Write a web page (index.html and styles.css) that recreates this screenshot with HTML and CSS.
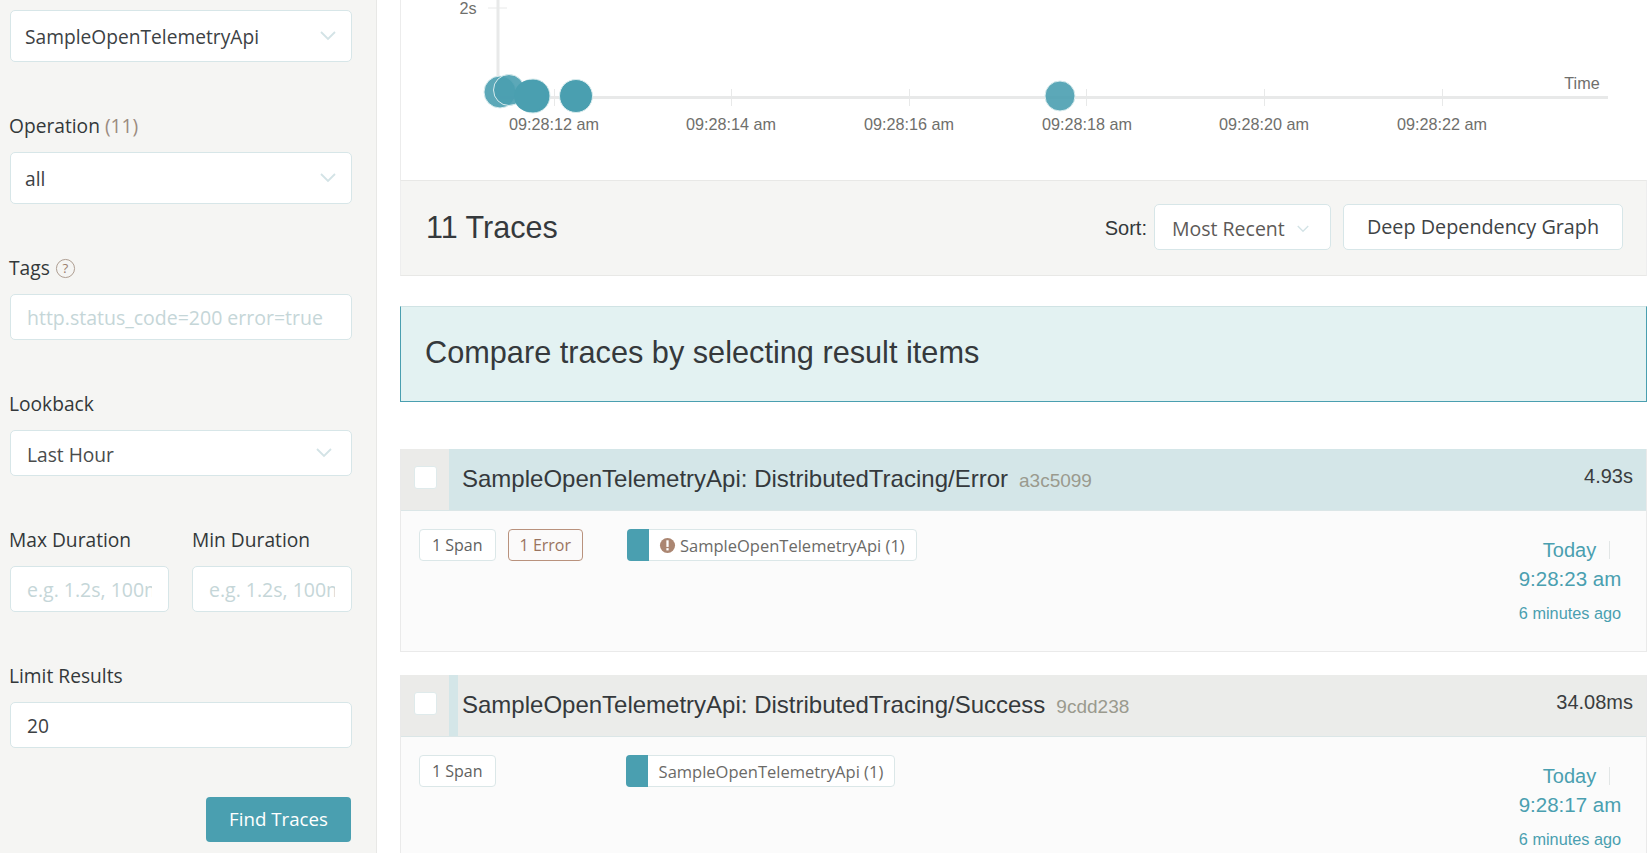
FILE: index.html
```html
<!DOCTYPE html>
<html lang="en">
<head>
<meta charset="utf-8">
<title>Jaeger UI</title>
<link rel="stylesheet" href="styles.css">
</head>
<body>
<div class="page">
  <aside class="sidebar">
    <div class="field">
      <div class="select tall"><span>SampleOpenTelemetryApi</span><svg class="chev" viewBox="0 0 16 10"><path d="M1 1l7 7 7-7"/></svg></div>
    </div>
    <div class="field">
      <div class="label">Operation <span class="muted">(11)</span></div>
      <div class="select tall"><span>all</span><svg class="chev" viewBox="0 0 16 10"><path d="M1 1l7 7 7-7"/></svg></div>
    </div>
    <div class="field">
      <div class="label">Tags <svg class="help" viewBox="0 0 22 22"><circle cx="11" cy="11" r="9.5"/><text x="11" y="16" text-anchor="middle">?</text></svg></div>
      <input class="input" placeholder="http.status_code=200 error=true">
    </div>
    <div class="field">
      <div class="label">Lookback</div>
      <div class="select"><span class="lookback">Last Hour</span><svg class="chev" viewBox="0 0 16 10"><path d="M1 1l7 7 7-7"/></svg></div>
    </div>
    <div class="field duo">
      <div class="col-max">
        <div class="label">Max Duration</div>
        <input class="input" placeholder="e.g. 1.2s, 100ms">
      </div>
      <div class="col-min">
        <div class="label">Min Duration</div>
        <input class="input" placeholder="e.g. 1.2s, 100ms">
      </div>
    </div>
    <div class="field last">
      <div class="label">Limit Results</div>
      <input class="input" value="20">
    </div>
    <div class="actions"><button class="find">Find Traces</button></div>
  </aside>

  <main class="main">
    <section class="chart">
      <svg class="plot" viewBox="0 0 1247 180" width="1247" height="180">
        <g class="axis">
          <path d="M98 -4V97.500H1208"/>
          <path class="thin" d="M88 8H107"/>
          <path class="thin" d="M154.500 89V106M331.500 89V106M509.500 89V106M686.500 89V106M864.500 89V106M1042.500 89V106"/>
        </g>
        <g class="ticks">
          <text x="68" y="14" text-anchor="middle">2s</text>
          <text x="154" y="130" text-anchor="middle">09:28:12 am</text>
          <text x="331" y="130" text-anchor="middle">09:28:14 am</text>
          <text x="509" y="130" text-anchor="middle">09:28:16 am</text>
          <text x="687" y="130" text-anchor="middle">09:28:18 am</text>
          <text x="864" y="130" text-anchor="middle">09:28:20 am</text>
          <text x="1042" y="130" text-anchor="middle">09:28:22 am</text>
          <text x="1182" y="89" text-anchor="middle">Time</text>
        </g>
        <g class="dots">
          <circle class="soft" cx="100" cy="92" r="16"/>
          <circle class="soft" cx="109" cy="90" r="15.500"/>
          <circle cx="133" cy="96" r="17"/>
          <circle class="core" cx="130" cy="96" r="16"/>
          <circle cx="176" cy="96" r="16.500"/>
          <circle class="soft" cx="660" cy="96" r="15"/>
        </g>
      </svg>
    </section>

    <section class="summary">
      <div class="count">11 Traces</div>
      <div class="summary-tools">
        <span class="sort-label">Sort:</span>
        <div class="sort"><span>Most Recent</span><svg class="chev small" viewBox="0 0 16 10"><path d="M1 1l7 7 7-7"/></svg></div>
        <button class="deep">Deep Dependency Graph</button>
      </div>
    </section>

    <section class="banner">Compare traces by selecting result items</section>

    <article class="trace first">
      <header class="trace-head error">
        <div class="check-cell"><span class="check"></span></div>
        <div class="trace-title"><span class="name">SampleOpenTelemetryApi: DistributedTracing/Error</span><span class="hash">a3c5099</span></div>
        <div class="duration">4.93s</div>
      </header>
      <div class="trace-body">
        <div class="tags">
          <span class="tag">1 Span</span>
          <span class="tag err">1 Error</span>
          <span class="svc">
            <span class="swatch"></span>
            <svg class="alert" viewBox="0 0 18 18"><circle cx="9" cy="9" r="8"/><rect x="7.800" y="3.500" width="2.400" height="7"/><rect x="7.800" y="11.800" width="2.400" height="2.400"/></svg>
            <span class="svc-name">SampleOpenTelemetryApi (1)</span>
          </span>
        </div>
        <div class="when">
          <div class="day"><span>Today</span><i class="sep"></i></div>
          <div class="time">9:28:23 am</div>
          <div class="ago">6 minutes ago</div>
        </div>
      </div>
    </article>

    <article class="trace">
      <header class="trace-head plain">
        <div class="check-cell"><span class="check"></span></div>
        <i class="strip"></i>
        <div class="trace-title short"><span class="name">SampleOpenTelemetryApi: DistributedTracing/Success</span><span class="hash">9cdd238</span></div>
        <div class="duration">34.08ms</div>
      </header>
      <div class="trace-body">
        <div class="tags">
          <span class="tag">1 Span</span>
          <span class="svc gap">
            <span class="swatch"></span>
            <span class="svc-name">SampleOpenTelemetryApi (1)</span>
          </span>
        </div>
        <div class="when">
          <div class="day"><span>Today</span><i class="sep"></i></div>
          <div class="time">9:28:17 am</div>
          <div class="ago">6 minutes ago</div>
        </div>
      </div>
    </article>
  </main>
</div>
</body>
</html>
```
FILE: styles.css
```css
* { box-sizing: border-box; }
html, body { margin: 0; height: 853px; overflow: hidden; background: #fff; }
body { font-family: "Open Sans", "Noto Sans", sans-serif; color: #333; }

.page { display: flex; height: 853px; }

.sidebar {
  width: 377px; flex: none; height: 853px;
  background: #f5f5f3; border-right: 1px solid #e8e8e6;
  padding: 10px 24px 0 10px;
}
.field { margin-bottom: 49px; }
.field.last { margin-bottom: 49px; }
.label { height: 28px; margin-bottom: 13px; margin-left: -1px; font-size: 19.200px; line-height: 28px; color: #33383a; display: flex; align-items: center; gap: 5px; white-space: nowrap; position: relative; top: 1px; }
.col-min .label { margin-left: 0; }
.muted { color: #9b8b80; }
.help { width: 21px; height: 21px; }
.help circle { fill: none; stroke: #ab9a8e; stroke-width: 1; }
.help text { font: 14px "Open Sans", sans-serif; fill: #9b7f6e; }

.select, .input {
  display: flex; align-items: center; justify-content: space-between;
  width: 100%; height: 46px; background: #fff;
  border: 1px solid #d7e6e8; border-radius: 5px;
  padding: 0 19px 0 16px; font-family: inherit; font-size: 19.200px; color: #3c4144; outline: none;
}
.select.tall { height: 52px; padding: 0 15px 0 14px; }
.lookback { color: #4a4c4c; position: relative; top: 1px; }
.input { padding: 1px 16px 0; }
.input::placeholder { color: #c5d6d8; opacity: 1; font-size: 19.500px; }
.chev { width: 16px; height: 10px; flex: none; }
.chev path { fill: none; stroke: #d3e3e6; stroke-width: 1.800; }
.chev.small { width: 12px; height: 8px; }

.duo { display: flex; justify-content: space-between; }
.col-max { width: 159px; }
.col-min { width: 160px; }
.actions { display: flex; justify-content: flex-end; padding-right: 1px; }
.find {
  width: 145px; height: 45px; background: #4a9fb0; color: #fff;
  border: 0; border-radius: 4px; font-family: inherit; font-size: 18.700px; padding: 0 0 2px;
}

.main { flex: none; width: 1247px; margin-left: 23px; }
.chart { height: 180px; border-left: 1px solid #ececec; overflow: hidden; }
.plot { display: block; overflow: hidden; margin-left: -1px; }
.axis path { fill: none; stroke: #e8e9e9; stroke-width: 3; }
.axis path.thin { stroke-width: 1; }
.ticks text { font: 16.200px "Liberation Sans", sans-serif; fill: #6f6f6c; }
.dots circle { fill: #4a9fb0; stroke: #d9ecee; stroke-width: 1; }
.dots .soft { fill-opacity: .9; }
.dots .core { stroke: none; }

.summary {
  height: 96px; display: flex; align-items: center; justify-content: space-between;
  background: #f5f5f3; border: 1px solid #e8e8e6; border-left-color: #eee; border-right-color: #eee;
  padding: 0 23px 2px 25px;
}
.count { font: 30.500px "Liberation Sans", sans-serif; color: #35393c; }
.summary-tools { display: flex; align-items: center; }
.sort-label { font: 20px "Liberation Sans", sans-serif; color: #33383a; margin-right: 7px; padding-top: 3px; }
.sort {
  width: 177px; height: 46px; display: flex; align-items: center; gap: 12px;
  background: #fff; border: 1px solid #d7e6e8; border-radius: 5px;
  padding: 3px 16px 0 17px; font-size: 19.500px; color: #5d5a58; white-space: nowrap;
}
.deep {
  width: 280px; height: 46px; margin-left: 12px; background: #fff;
  border: 1px solid #d7e6e8; border-radius: 5px; padding: 0 0 2px;
  font-family: inherit; font-size: 19.800px; color: #3e4345; white-space: nowrap;
}

.banner {
  height: 96px; margin-top: 30px; display: flex; align-items: center;
  padding: 0 0 2px 24px;
  background: #e3f2f2; border: 1px solid #d0e3e4; border-bottom-color: #4a9fb0; border-right-color: #4a9fb0; border-left-color: #4a9fb0;
  font: 30.700px "Liberation Sans", sans-serif; color: #35393c;
}

.trace { margin-top: 23px; border: 1px solid #eaeaea; border-top: 0; }
.trace.first { margin-top: 47px; height: 203px; }
.trace-head { height: 62px; display: flex; align-items: center; background: #ebecea; border-bottom: 1px solid #dbe6e7; }
.check-cell { width: 48px; height: 100%; background: #ebebe9; display: flex; align-items: center; justify-content: center; flex: none; }
.check { width: 23px; height: 23px; background: #fff; border: 1px solid #dfeaeb; border-radius: 3px; display: block; margin-top: -4px; }
.trace-head.error { background: #d4e6e8; }
.strip { width: 9px; height: 100%; background: #d4e6e8; flex: none; }
.trace-title { flex: 1; display: flex; align-items: baseline; padding: 0 0 2px 13px; font-family: "Liberation Sans", sans-serif; }
.trace-title.short { padding-left: 4px; }
.name { font-size: 24px; color: #35393c; }
.hash { font-size: 19px; color: #9a9a8e; margin-left: 11px; }
.duration { font: 20px "Liberation Sans", sans-serif; color: #3a3d3f; padding-right: 13px; padding-bottom: 6px; }

.trace-body { display: flex; justify-content: space-between; background: #fbfbfb; height: 140px; padding: 18px 24px 0 18px; }
.tags { display: flex; align-items: flex-start; }
.tag {
  height: 32px; padding: 0 12px; display: flex; align-items: center;
  background: #fff; border: 1px solid #dbe7e8; border-radius: 4px;
  font-size: 16px; color: #5f6261; margin-right: 12px; white-space: nowrap;
}
.tag.err { border-color: #b9927d; background: #fbfafa; color: #9a7460; margin-right: 0; padding: 0 11px; }
.svc {
  height: 32px; display: flex; align-items: center; background: #fff;
  border: 1px solid #dbe7e8; border-radius: 4px; margin-left: 44px;
  font-size: 16.500px; color: #6b6a67; padding-right: 11px; white-space: nowrap;
}
.svc.gap { margin-left: 118px; }
.swatch { width: 22px; height: 32px; background: #4a9fb0; margin: 0 10px 0 -1px; flex: none; border-radius: 4px 0 0 4px; }
.alert { width: 17px; height: 17px; margin-right: 4px; flex: none; }
.alert circle { fill: #ab8672; }
.alert rect { fill: #fff; }
.svc.gap .swatch { margin-right: 11px; }

.when { width: 104px; color: #4a9fb0; font-family: "Liberation Sans", sans-serif; text-align: center; padding-top: 9px; }
.day { font-size: 20px; line-height: 24px; position: relative; height: 24px; padding-right: 1px; }
.sep { position: absolute; right: 12px; top: 3px; width: 1px; height: 18px; background: #e2e6e6; }
.time { font-size: 20.500px; line-height: 24px; margin-top: 5px; }
.ago { font-size: 16.300px; line-height: 20px; margin-top: 12px; }
```
